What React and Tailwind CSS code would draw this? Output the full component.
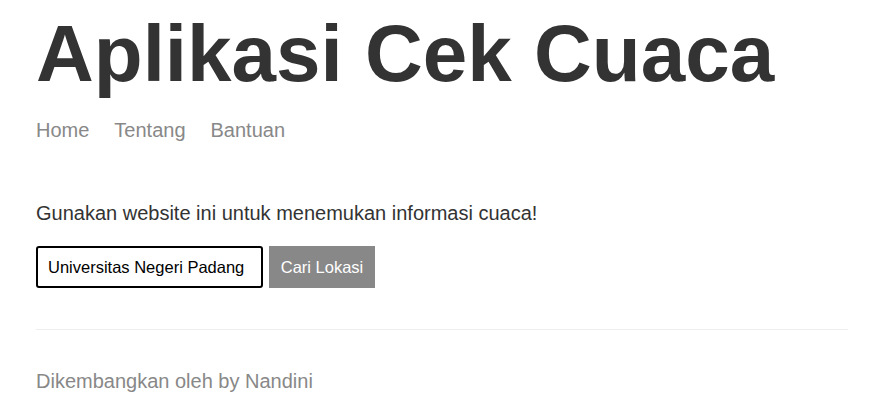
export default function App() {
  return (
    <div className="min-h-[412px] bg-white px-[36px] font-['Liberation_Sans',Arial,sans-serif] text-[#333]">
      <h1 className="pt-[14px] text-[80px] font-bold leading-[80px] text-[#333]">Aplikasi Cek Cuaca</h1>
      <nav className="mt-[26px] flex gap-[25px] text-[20px] leading-[20px] text-[#888]">
        <a>Home</a>
        <a>Tentang</a>
        <a>Bantuan</a>
      </nav>
      <p className="mt-[63px] text-[20px] leading-[20px] text-[#333]">Gunakan website ini untuk menemukan informasi cuaca!</p>
      <form className="mt-[23px] flex gap-[6px]">
        <input
          defaultValue="Universitas Negeri Padang"
          className="h-[42px] w-[227px] rounded-[3px] border-2 border-black px-[10px] text-[16.5px] text-black outline-none"
        />
        <button type="button" className="h-[42px] w-[106px] bg-[#888] text-[16.5px] text-white">Cari Lokasi</button>
      </form>
      <hr className="mt-[41px] w-[812px] border-t border-[#eee]" />
      <p className="mt-[41px] text-[20px] leading-[20px] text-[#888]">Dikembangkan oleh by Nandini</p>
    </div>
  );
}
